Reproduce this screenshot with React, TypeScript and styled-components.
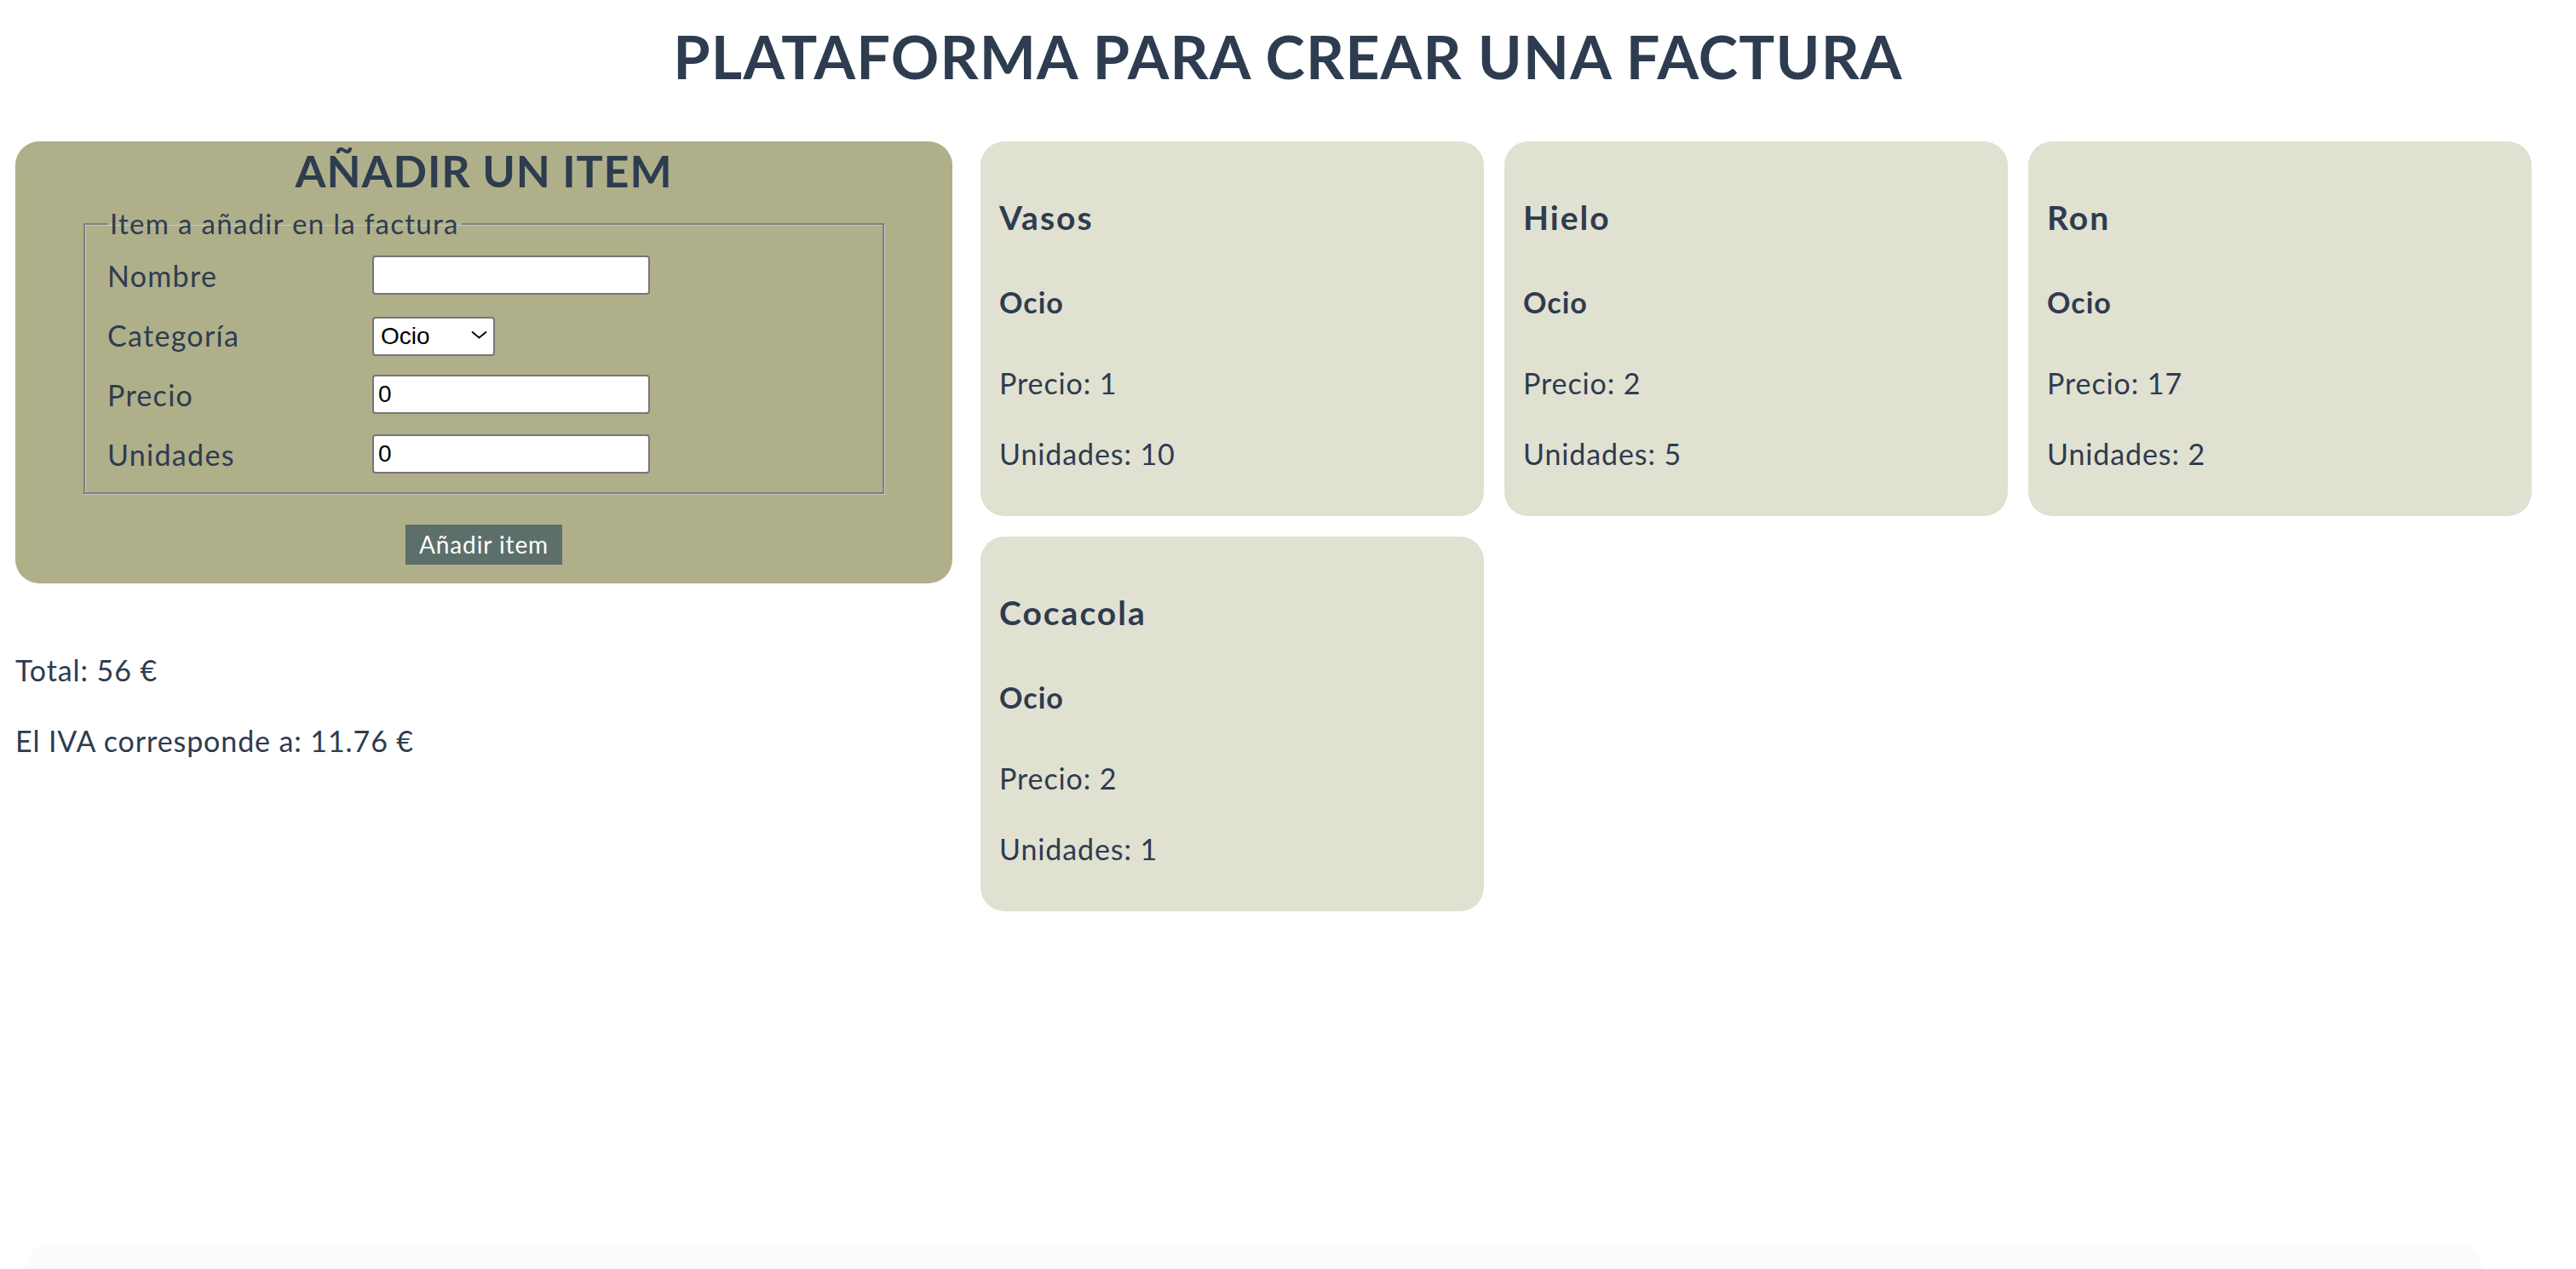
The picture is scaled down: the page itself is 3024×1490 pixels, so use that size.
import styled, { createGlobalStyle } from "styled-components";

const GlobalStyle = createGlobalStyle`
  html, body {
    margin: 0;
    padding: 0;
    background: #ffffff;
  }
  body {
    font-family: Lato, "Noto Sans", sans-serif;
    color: #2e3c4f;
  }
  * {
    box-sizing: border-box;
  }
`;

const Page = styled.div`
  padding-top: 24px;
`;

const Title = styled.h1`
  margin: 0 0 58px;
  text-align: center;
  font-size: 70px;
  line-height: 84px;
  font-weight: 700;
  letter-spacing: 1.2px;
`;

const Main = styled.div`
  display: flex;
  align-items: flex-start;
  gap: 33px;
  padding: 0 52px 40px 18px;
`;

const LeftColumn = styled.div`
  display: flex;
  flex-direction: column;
  width: 1100px;
  flex-shrink: 0;
`;

const Panel = styled.form`
  display: flex;
  flex-direction: column;
  align-items: center;
  background: #afaf8a;
  border-radius: 28px;
  padding: 3px 0 22px;
`;

const PanelTitle = styled.h2`
  margin: 0;
  font-size: 52px;
  line-height: 62px;
  font-weight: 700;
  letter-spacing: 0.9px;
`;

const Fieldset = styled.fieldset`
  width: 940px;
  margin: 13px 0 0;
  padding: 19px 26px 22px;
  border: 2px solid #808080;
  box-shadow: inset 1px 1px 0 #c8c8c8, 1px 1px 0 #c8c8c8;
  display: flex;
  flex-direction: column;
  gap: 24px;
`;

const Legend = styled.legend`
  padding: 0 3px;
  font-size: 33px;
  line-height: 37px;
  letter-spacing: 1.3px;
`;

const FormRow = styled.label`
  display: grid;
  grid-template-columns: 311px auto;
  align-items: center;
  font-size: 34px;
  line-height: 41px;
  letter-spacing: 1.3px;
`;

const TextInput = styled.input`
  width: 326px;
  height: 46px;
  border: 2px solid #767676;
  border-radius: 4px;
  background: #ffffff;
  padding: 0 5px;
  font-family: "Liberation Sans", Arial, sans-serif;
  font-size: 28px;
  color: #000000;
`;

const SelectWrap = styled.div`
  position: relative;
  width: 144px;
  height: 46px;
`;

const Select = styled.select`
  appearance: none;
  width: 100%;
  height: 100%;
  border: 2px solid #767676;
  border-radius: 4px;
  background: #ffffff;
  padding: 0 0 0 8px;
  font-family: "Liberation Sans", Arial, sans-serif;
  font-size: 28px;
  color: #000000;
`;

const Chevron = styled.svg`
  position: absolute;
  right: 9px;
  top: 18px;
  width: 19px;
  height: 10px;
  pointer-events: none;
`;

const SubmitButton = styled.button`
  margin-top: 36px;
  padding: 6px 16px 7px;
  border: none;
  background: #5c6f6b;
  color: #ffffff;
  font-family: Lato, "Noto Sans", sans-serif;
  font-size: 28px;
  line-height: 34px;
  letter-spacing: 0.9px;
`;

const Summary = styled.p<{ $top: number }>`
  margin: ${(p) => p.$top}px 0 0;
  font-size: 34px;
  line-height: 41px;
  letter-spacing: 0.9px;
`;

const CardGrid = styled.div`
  display: grid;
  grid-template-columns: repeat(3, 591px);
  gap: 24px;
  align-items: start;
`;

const Card = styled.div`
  background: #e1e1d1;
  border-radius: 28px;
  padding: 0 22px 53px;
`;

const CardName = styled.h3`
  margin: 66px 0 0;
  font-size: 39px;
  line-height: 47px;
  font-weight: 700;
  letter-spacing: 2px;
`;

const CardCategory = styled.h4`
  margin: 55px 0 0;
  font-size: 34px;
  line-height: 41px;
  font-weight: 700;
  letter-spacing: 1px;
`;

const CardLine = styled.p<{ $top: number }>`
  margin: ${(p) => p.$top}px 0 0;
  font-size: 34px;
  line-height: 41px;
  letter-spacing: 0.9px;
`;

const BottomGlow = styled.div`
  position: fixed;
  left: 30px;
  right: 110px;
  bottom: 0;
  height: 30px;
  border-radius: 40px 40px 0 0;
  background: #fbfbfb;
  pointer-events: none;
`;

type Item = { name: string; category: string; price: number; units: number };

const items: Item[] = [
  { name: "Vasos", category: "Ocio", price: 1, units: 10 },
  { name: "Hielo", category: "Ocio", price: 2, units: 5 },
  { name: "Ron", category: "Ocio", price: 17, units: 2 },
  { name: "Cocacola", category: "Ocio", price: 2, units: 1 },
];

export default function App() {
  const total = items.reduce((sum, i) => sum + i.price * i.units, 0);
  const iva = (total * 0.21).toFixed(2);

  return (
    <Page>
      <GlobalStyle />
      <Title>PLATAFORMA PARA CREAR UNA FACTURA</Title>
      <Main>
        <LeftColumn>
          <Panel onSubmit={(e) => e.preventDefault()}>
            <PanelTitle>AÑADIR UN ITEM</PanelTitle>
            <Fieldset>
              <Legend>Item a añadir en la factura</Legend>
              <FormRow>
                Nombre
                <TextInput type="text" />
              </FormRow>
              <FormRow>
                Categoría
                <SelectWrap>
                  <Select defaultValue="Ocio">
                    <option>Ocio</option>
                    <option>Comida</option>
                    <option>Otros</option>
                  </Select>
                  <Chevron viewBox="0 0 19 10" fill="none">
                    <path d="M1 1.5 L9.5 8.5 L18 1.5" stroke="#000" strokeWidth="1.8" />
                  </Chevron>
                </SelectWrap>
              </FormRow>
              <FormRow>
                Precio
                <TextInput type="text" defaultValue="0" />
              </FormRow>
              <FormRow>
                Unidades
                <TextInput type="text" defaultValue="0" />
              </FormRow>
            </Fieldset>
            <SubmitButton type="submit">Añadir item</SubmitButton>
          </Panel>
          <Summary $top={81}>Total: {total} €</Summary>
          <Summary $top={42}>El IVA corresponde a: {iva} €</Summary>
        </LeftColumn>
        <CardGrid>
          {items.map((item) => (
            <Card key={item.name}>
              <CardName>{item.name}</CardName>
              <CardCategory>{item.category}</CardCategory>
              <CardLine $top={54}>Precio: {item.price}</CardLine>
              <CardLine $top={42}>Unidades: {item.units}</CardLine>
            </Card>
          ))}
        </CardGrid>
      </Main>
      <BottomGlow />
    </Page>
  );
}
